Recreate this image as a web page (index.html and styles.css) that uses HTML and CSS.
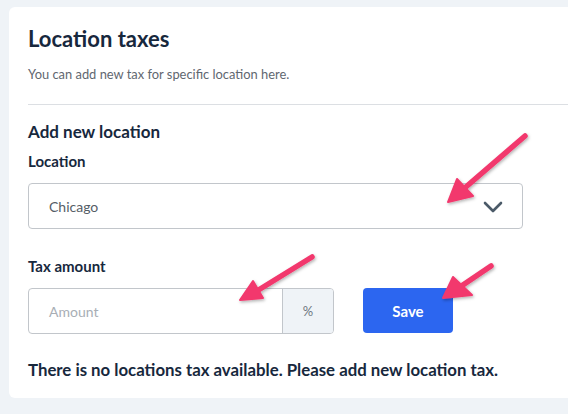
FILE: index.html
```html
<!DOCTYPE html>
<html>
<head>
<meta charset="utf-8">
<link rel="stylesheet" href="styles.css">
</head>
<body>
<div class="card">
  <h1 class="title">Location taxes</h1>
  <p class="subtitle">You can add new tax for specific location here.</p>
  <hr class="divider">
  <h2 class="section">Add new location</h2>
  <label class="label">Location</label>
  <div class="select">
    <span class="select-value">Chicago</span>
    <svg class="chevron" width="20" height="12" viewBox="0 0 20 12"><path d="M2 2 L10 10 L18 2" fill="none" stroke="#4b5a68" stroke-width="2.6" stroke-linecap="round" stroke-linejoin="round"/></svg>
  </div>
  <label class="label label-tax">Tax amount</label>
  <div class="tax-row">
    <div class="input-group">
      <span class="input">Amount</span>
      <span class="addon">%</span>
    </div>
    <button class="save">Save</button>
  </div>
  <p class="empty">There is no locations tax available. Please add new location tax.</p>
</div>
<svg class="arrows" width="568" height="414" viewBox="0 0 568 414">
  <defs>
    <filter id="sh" x="-20%" y="-20%" width="140%" height="140%">
      <feDropShadow dx="1" dy="1.5" stdDeviation="1.5" flood-color="#000" flood-opacity="0.3"/>
    </filter>
  </defs>
  <g filter="url(#sh)" fill="#f2386d" stroke="#f2386d" stroke-linecap="round" stroke-linejoin="round">
    <line x1="525" y1="136" x2="460" y2="192" stroke-width="5.5"/>
    <polygon points="448,202 457,179 473,196" stroke-width="2"/>
    <line x1="312" y1="257" x2="252" y2="294" stroke-width="5.5"/>
    <polygon points="240,300 253,281 263,298" stroke-width="2"/>
    <line x1="491" y1="266" x2="454" y2="291" stroke-width="5.5"/>
    <polygon points="443,298 453,277 472,295" stroke-width="2"/>
  </g>
</svg>
</body>
</html>
```
FILE: styles.css
```css
html, body {
  margin: 0;
  padding: 0;
}
body {
  background: #eff3f7;
  width: 568px;
  height: 414px;
  overflow: hidden;
  position: relative;
  font-family: Lato, "Open Sans", sans-serif;
  color: #18283d;
}
.card {
  margin: 7px 0 0 9px;
  width: 559px;
  height: 391px;
  box-sizing: border-box;
  background: #fff;
  border-radius: 6px 0 0 6px;
  padding: 19px 0 0 19px;
}
.title {
  margin: 0;
  font-size: 22px;
  font-weight: 700;
  line-height: 26px;
  color: #17283d;
}
.subtitle {
  margin: 14px 0 0 0;
  font-size: 12.9px;
  line-height: 16px;
  color: #5f6770;
}
.divider {
  margin: 22px 0 0 0;
  border: 0;
  border-top: 1px solid #dcdfe3;
  height: 0;
}
.section {
  margin: 17px 0 0 0;
  font-size: 17px;
  font-weight: 700;
  line-height: 20px;
  color: #17283d;
}
.label {
  display: block;
  margin-top: 10px;
  font-size: 15px;
  font-weight: 700;
  line-height: 18px;
  color: #17283d;
}
.select {
  margin-top: 13px;
  width: 495px;
  height: 46px;
  box-sizing: border-box;
  border: 1px solid #c2c6cb;
  border-radius: 4px;
  display: flex;
  align-items: center;
  justify-content: space-between;
  padding: 0 19px 0 20px;
}
.select-value {
  font-size: 14px;
  color: #555d66;
}
.chevron {
  display: block;
  margin-top: 1px;
}
.label-tax {
  margin-top: 28px;
}
.tax-row {
  margin-top: 13px;
  display: flex;
  align-items: flex-start;
  gap: 29px;
}
.input-group {
  display: flex;
  width: 306px;
  height: 46px;
  box-sizing: border-box;
  border: 1px solid #c2c6cb;
  border-radius: 4px;
  overflow: hidden;
}
.input {
  flex: 1;
  display: flex;
  align-items: center;
  padding-left: 20px;
  font-size: 14px;
  color: #a8aeb5;
}
.addon {
  width: 50px;
  border-left: 1px solid #c2c6cb;
  background: #eff3f7;
  display: flex;
  align-items: center;
  justify-content: center;
  font-size: 13px;
  color: #6d7680;
}
.save {
  width: 90px;
  height: 45px;
  border: 0;
  border-radius: 4px;
  background: #2c66f0;
  color: #fff;
  font-family: Lato, sans-serif;
  font-size: 15px;
  font-weight: 700;
  padding: 0;
}
.empty {
  margin: 26px 0 0 0;
  font-size: 16.8px;
  font-weight: 700;
  line-height: 20px;
  color: #17283d;
}
.arrows {
  position: absolute;
  left: 0;
  top: 0;
  pointer-events: none;
}
```
